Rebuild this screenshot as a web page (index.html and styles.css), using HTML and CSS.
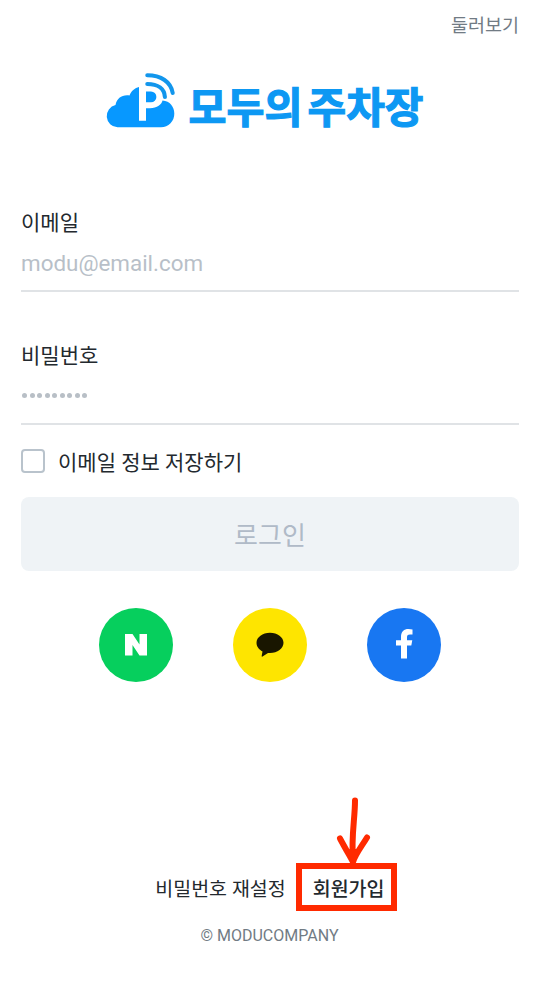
FILE: index.html
```html
<!DOCTYPE html>
<html lang="ko">
<head>
<meta charset="utf-8">
<title>모두의주차장</title>
<link rel="stylesheet" href="styles.css">
</head>
<body>
<main class="screen">
  <header class="top"><a class="browse">둘러보기</a></header>
  <div class="brand">
    <svg class="logo" width="330" height="64" viewBox="0 0 330 64">
      <path class="fill" d="M17.500 57.300A11.300 11.300 0 0 1 15.500 35C17 28 22 24.500 29.500 25.500 31 21 35 18 39 17V50.700H46V38.300H50C57 38.300 62 34 62.500 30.500 70 31 74.300 37 74.300 43.500A13.500 13.500 0 0 1 61 57.300z"/>
      <path class="fill" d="M46 21.500h5a5.400 5.400 0 0 1 0 10.800h-5z"/>
      <path class="wave" d="M47.300 14C58 14 64.500 19 64.900 27M47.300 5.300C61 5.300 71 12 72.700 23"/>
      <text x="88.500" y="53" textLength="114" lengthAdjust="spacingAndGlyphs">모두의</text>
      <text x="207.500" y="53" textLength="116" lengthAdjust="spacingAndGlyphs">주차장</text>
    </svg>
  </div>
  <section class="field">
    <label class="label">이메일</label>
    <div class="value">modu@email.com</div>
  </section>
  <section class="field password">
    <label class="label">비밀번호</label>
    <div class="value dots"><i></i><i></i><i></i><i></i><i></i><i></i><i></i><i></i><i></i></div>
  </section>
  <label class="remember"><span class="box"></span><span class="remember-text">이메일 정보 저장하기</span></label>
  <button class="login">로그인</button>
  <nav class="social">
    <a class="naver"><svg width="74" height="74" viewBox="0 0 74 74"><path d="M26 26h7.500l7 10.500V26H48v21.500h-7.500l-7-10.500v10.500H26z"/></svg></a>
    <a class="kakao"><svg width="74" height="74" viewBox="0 0 74 74"><path d="M37 24.800c7.500 0 13.500 4.500 13.500 10S44.500 45 37 45l-2-.1-5.500 3.600q-1 .5-.8-.7l.8-4.200c-3.500-2-6-5-6-8.800 0-5.500 6-10 13.500-10z"/></svg></a>
    <a class="facebook"><svg width="74" height="74" viewBox="0 0 74 74"><path d="M34 50.500V37.500h-5v-5.300h5V29c0-5.500 3-8 7.500-8q2 0 4 .4v5h-2.500c-2.500 0-3 1-3 3v2.800h5.300l-1 5.300H40v13z"/></svg></a>
  </nav>
  <footer>
    <div class="links">
      <a class="reset">비밀번호 재설정</a>
      <a class="join">회원가입
        <svg class="arrow" width="40" height="72" viewBox="0 0 40 72"><path d="M21 4.500C21 23 17 40 19 64M6 42.500C10 50 14 57 19 66 22 57 28 50 33 41.500M14 56L19 62 23 56"/></svg>
      </a>
    </div>
    <p class="copy">© MODUCOMPANY</p>
  </footer>
</main>
</body>
</html>
```

FILE: styles.css
```css
* { box-sizing: border-box; }
body {
  margin: 0;
  background: #fff;
  color: #23292e;
  font-family: Roboto, "Noto Sans CJK KR", sans-serif;
}
.screen { height: 983px; padding: 0 21px; overflow: hidden; }
.top { display: flex; justify-content: flex-end; height: 68px; padding-top: 11px; }
.browse { color: #717b84; font-size: 18.5px; line-height: 30px; }
.brand { height: 138px; padding: 2px 0 0 79px; }
.logo { display: block; }
.logo text { fill: #0d98f3; stroke: #0d98f3; stroke-width: 1.2; font: 700 42.5px "Noto Sans CJK KR", sans-serif; }
.fill { fill: #0798ff; }
.wave { fill: none; stroke: #1296ec; stroke-width: 4.1; stroke-linecap: round; }
.field { height: 86px; padding-top: 1px; border-bottom: 2px solid #e0e3e6; }
.label { display: block; font-size: 21px; line-height: 32px; }
.value { color: #b8bfc8; font-size: 22.4px; line-height: 32px; padding-top: 8px; }
.password { margin-top: 47px; }
.dots { display: flex; gap: 2.500px; padding: 21px 0 0 1px; }
.dots i { width: 5px; height: 5px; border-radius: 50%; background: #b8bfc6; }
.remember { display: flex; align-items: center; gap: 13px; height: 32px; margin-top: 20px; font-size: 21px; line-height: 32px; }
.remember-text { padding-top: 3px; }
.box { width: 24px; height: 24px; border: 2px solid #b9c3cc; border-radius: 4px; }
.login {
  display: block; width: 100%; height: 74px; margin-top: 20px; padding: 0 0 2px;
  border: 0; border-radius: 8px; background: #eff3f6; color: #b0bac7;
  font: 26px "Noto Sans CJK KR", sans-serif;
}
.social { display: flex; justify-content: center; gap: 60px; margin-top: 37px; }
.social a { width: 74px; height: 74px; border-radius: 50%; }
.social svg { display: block; }
.naver { background: #06cf5d; fill: #fff; }
.kakao { background: #fee500; fill: #191600; }
.facebook { background: #1877f2; fill: #fff; }
footer { margin-top: 181px; }
.links { display: flex; justify-content: center; align-items: center; gap: 10px; padding-left: 12px; font-size: 19.500px; line-height: 30px; }
.reset { padding-top: 5px; }
.join { position: relative; width: 101px; height: 48px; padding: 6px 0 0 11px; border: 6px solid #ff2a00; font-weight: 500; white-space: nowrap; }
.arrow { position: absolute; left: 32px; top: -73px; fill: none; stroke: #ff2a00; stroke-width: 6; stroke-linecap: round; stroke-linejoin: round; }
.copy { margin: 14px 0 0; padding-right: 1px; text-align: center; color: #717b84; font-size: 16px; line-height: 22px; }
```
